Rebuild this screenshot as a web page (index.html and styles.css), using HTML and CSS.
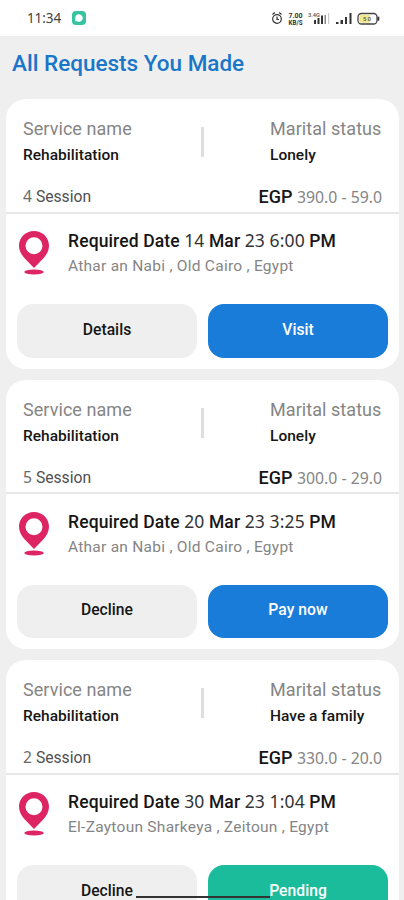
FILE: index.html
```html
<!DOCTYPE html>
<html lang="en">
<head>
<meta charset="utf-8">
<meta name="viewport" content="width=device-width, initial-scale=1">
<title>All Requests You Made</title>
<link rel="stylesheet" href="styles.css">
</head>
<body>
<svg class="defs" aria-hidden="true">
  <symbol id="pin" viewBox="0 0 30 44">
    <path fill="#de2563" fill-rule="evenodd" d="M15 0C6.500 0 0 6.500 0 14.700c0 4.600 2.200 8.500 5.300 12.300L15 37l9.700-10C27.800 23.200 30 19.300 30 14.700 30 6.500 23.500 0 15 0Zm0 6.200a8.500 8.500 0 1 1 0 17 8.500 8.500 0 0 1 0-17Z"/>
    <ellipse fill="#de2563" cx="15" cy="41" rx="9.700" ry="2.400"/>
  </symbol>
</svg>
<div class="screen">
  <header class="status">
    <span class="clock">11:34</span>
    <svg class="app" viewBox="0 0 14 14"><rect width="14" height="14" rx="4" fill="#35c3a2"/><path fill="#fff" d="M7 3.200a3.800 3.800 0 1 1-1.900 7.100H3.300V7A3.700 3.700 0 0 1 7 3.200Z"/></svg>
    <svg class="indicators" viewBox="0 0 112 16">
      <g fill="none" stroke="#333" stroke-width="1.200"><circle cx="5" cy="9" r="4.300"/><path d="M.5 4.500 2.800 2.500M9.500 4.500 7.200 2.500M5 6.500V9.500h2"/></g>
      <g class="tiny"><text x="16.500" y="8" textLength="14" lengthAdjust="spacingAndGlyphs">7.00</text><text x="16.500" y="14.500" textLength="14" lengthAdjust="spacingAndGlyphs">KB/S</text></g>
      <text class="micro" x="36" y="7" textLength="12" lengthAdjust="spacingAndGlyphs">3.4G</text>
      <g fill="#333"><path d="M45.500 8h2v6h-2zM49 5.500h2V14h-2zM42 10h2v4h-2z"/><path fill="#888" d="M52.500 5h1.500v9h-1.500z"/><path fill="#ccc" d="M56 3h1.200v11H56z"/><path d="M64 12h2.500v2H64zM68.500 10H71v4h-2.500zM73 7h2v7h-2zM77.500 3h2v11h-2z"/></g>
      <rect x="86" y="3.500" width="19" height="10.500" rx="3.500" fill="#fff" stroke="#444" stroke-width="1.300"/><rect x="87.300" y="4.800" width="11" height="8" rx="2" fill="#f3e78c"/><path fill="#333" d="M105.500 6.700h1.800v4h-1.800z"/>
      <text class="micro" x="91" y="11" textLength="8">50</text>
    </svg>
  </header>
  <h1>All Requests You Made</h1>
  <main>
    <article class="card">
      <section class="info">
        <div class="row">
          <div class="col"><div class="label">Service name</div><div class="value">Rehabilitation</div></div>
          <i class="bar"></i>
          <div class="col right"><div class="label">Marital status</div><div class="value">Lonely</div></div>
        </div>
        <div class="price-row"><div class="session"><span class="num">4</span> Session</div><div class="price"><b>EGP</b> <span class="num">390.0 - 59.0</span></div></div>
      </section>
      <section class="place"><svg class="pin"><use href="#pin"/></svg>
        <div><div class="date">Required Date <span class="num">14</span> Mar <span class="num">23 6:00</span> PM</div><div class="addr">Athar an Nabi , Old Cairo , Egypt</div></div></section>
      <div class="actions"><button>Details</button><button class="blue">Visit</button></div>
    </article>
    <article class="card">
      <section class="info">
        <div class="row">
          <div class="col"><div class="label">Service name</div><div class="value">Rehabilitation</div></div>
          <i class="bar"></i>
          <div class="col right"><div class="label">Marital status</div><div class="value">Lonely</div></div>
        </div>
        <div class="price-row"><div class="session"><span class="num">5</span> Session</div><div class="price"><b>EGP</b> <span class="num">300.0 - 29.0</span></div></div>
      </section>
      <section class="place"><svg class="pin"><use href="#pin"/></svg>
        <div><div class="date">Required Date <span class="num">20</span> Mar <span class="num">23 3:25</span> PM</div><div class="addr">Athar an Nabi , Old Cairo , Egypt</div></div></section>
      <div class="actions"><button>Decline</button><button class="blue">Pay now</button></div>
    </article>
    <article class="card">
      <section class="info">
        <div class="row">
          <div class="col"><div class="label">Service name</div><div class="value">Rehabilitation</div></div>
          <i class="bar"></i>
          <div class="col right"><div class="label">Marital status</div><div class="value">Have a family</div></div>
        </div>
        <div class="price-row"><div class="session"><span class="num">2</span> Session</div><div class="price"><b>EGP</b> <span class="num">330.0 - 20.0</span></div></div>
      </section>
      <section class="place"><svg class="pin"><use href="#pin"/></svg>
        <div><div class="date">Required Date <span class="num">30</span> Mar <span class="num">23 1:04</span> PM</div><div class="addr">El-Zaytoun Sharkeya , Zeitoun , Egypt</div></div></section>
      <div class="actions"><button>Decline</button><button class="green">Pending</button></div>
    </article>
  </main>
  <div class="home"></div>
</div>
</body>
</html>
```

FILE: styles.css
```css
* { box-sizing: border-box; }
body { margin: 0; font-family: Roboto, "Noto Sans", sans-serif; font-weight: 500; color: #161616; }
.defs { display: none; }
.screen { position: relative; width: 404px; height: 900px; overflow: hidden; background: #efefef; }
.status { display: flex; align-items: center; height: 36px; background: #fff; padding: 0 20px 0 27px; }
.clock { font: 400 13.500px/36px "Noto Sans", sans-serif; color: #444; width: 44.500px; letter-spacing: -.1px; }
.app { width: 14px; height: 14px; }
.indicators { width: 112px; height: 16px; margin-left: auto; }
.tiny { font: 700 7px Roboto, sans-serif; fill: #333; }
.micro { font: 500 6px Roboto, sans-serif; fill: #555; }
h1 { margin: 0; height: 63px; padding-left: 12px; font-size: 22.500px; line-height: 55px; font-weight: 500; letter-spacing: 0; color: #1976c9; }
main { display: flex; flex-direction: column; gap: 11px; padding: 0 5px 0 6px; }
.card { flex: none; height: 269.600px; border-radius: 20px; background: #fff; }
.info { height: 114.500px; padding: 19px 17px 0; border-bottom: 2px solid #e7e7e7; }
.row { display: flex; justify-content: space-between; height: 67px; }
.col { width: 170px; }
.col.right { width: 112px; }
.label { font-size: 18px; line-height: 22px; font-weight: 400; letter-spacing: .06px; color: #858585; white-space: nowrap; }
.value { margin-top: 5px; font-size: 15.500px; line-height: 20px; letter-spacing: .02px; white-space: nowrap; }
.bar { width: 3px; height: 30px; margin: 9px 58px 0 0; background: #dedede; }
.price-row { display: flex; justify-content: space-between; line-height: 22px; white-space: nowrap; }
.session { font-size: 15.700px; font-weight: 400; color: #505050; }
.session .num { color: #6a6a6a; }
.price { font-size: 18px; padding-top: 1px; }
.price b { font-weight: 500; }
.num { font-family: "Noto Sans", sans-serif; font-weight: 400; }
.price .num { font-size: 15.800px; color: #858585; }
.place { display: flex; padding: 17.500px 13px 0; height: 90.500px; }
.pin { flex: none; width: 30px; height: 44px; margin-right: 19px; }
.date { font-size: 17.500px; line-height: 22px; letter-spacing: .12px; white-space: nowrap; margin-top: -2px; }
.date .num { color: #333; }
.addr { margin-top: 3px; font-size: 15.500px; line-height: 22px; font-weight: 400; color: #858585; letter-spacing: .26px; white-space: nowrap; }
.actions { display: flex; gap: 11px; padding: 0 11px; }
button { flex: 1; height: 53.500px; border: 0; padding: 0 0 3px; border-radius: 16px; background: #efefef; font: 500 15.700px Roboto, sans-serif; letter-spacing: .02px; color: #161616; }
button.blue { background: #197cd8; color: #fff; }
button.green { background: #1bbc9c; color: #fff; }
.home { position: absolute; left: 136px; top: 895.500px; width: 134px; height: 2px; background: #333; }
```
